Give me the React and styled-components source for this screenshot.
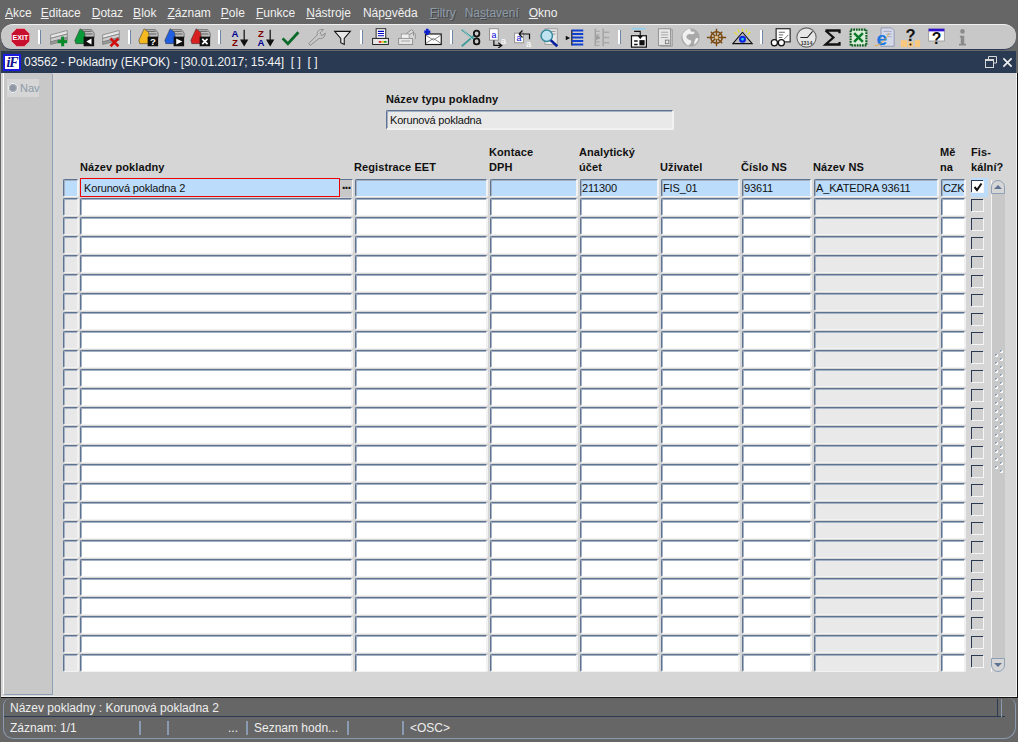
import React from 'react';
import styled, { createGlobalStyle } from 'styled-components';

const Global = createGlobalStyle`
  html, body { margin: 0; padding: 0; background: #666666; overflow: hidden; }
  * { box-sizing: border-box; }
  body { font-family: "Liberation Sans", Arial, sans-serif; }
`;

const Page = styled.div`
  width: 1018px; height: 742px; background: #666666; display: flex; flex-direction: column; overflow: hidden;
`;
const MenuBar = styled.div`
  height: 24px; display: flex; align-items: center; padding: 2px 0 0 5px; flex: none;
`;
const MenuItem = styled.span`
  font-size: 12px; margin-right: ${p => p.$gap}px; color: ${p => (p.$off ? '#8d9cab' : '#f0f0f0')};
  text-shadow: ${p => (p.$off ? '1px 1px 0 #484848' : 'none')};
  white-space: nowrap;
`;
const Toolbar = styled.div`
  height: 26px; margin: 0 2px 0 1px; flex: none; display: flex; align-items: center; padding-left: 6px;
  background: #c8c8c8; border-top: 1px solid #f0f0f0; border-bottom: 1px solid #2a3a52;
  border-radius: 12px 12px 12px 10px / 12px;
`;
const Slot = styled.div`
  width: 26px; height: 24px; flex: none; display: flex; align-items: center; justify-content: center;
  svg { display: block; }
`;
const Sep = styled.div`
  width: 12px; height: 24px; flex: none; display: flex; justify-content: center; align-items: center;
  &::before { content: ''; width: 2px; height: 14px; background: #fff; border-right: 1px solid #6f86a4; }
`;
const Win = styled.div`
  flex: 1; margin: 1px 0 0 1px; display: flex; flex-direction: column; min-height: 0;
`;
const TitleBar = styled.div`
  height: 22px; flex: none; margin-right: 2px; background: #2a3a52; display: flex; align-items: center; color: #f2f2f2; font-size: 12px;
  padding: 0 3px 0 2px;
`;
const Logo = styled.span`
  width: 18px; height: 17px; background: #fff; border: 2px solid #1a1ae0; color: #101090; font: italic bold 14px/13px "Liberation Serif", serif;
  text-align: center; margin-right: 3px; letter-spacing: -1px; flex: none; overflow: hidden;
`;
const TitleText = styled.span`flex: 1; white-space: pre;`;
const WinBtns = styled.div`display: flex; gap: 5px; align-items: center;`;
const Body = styled.div`
  flex: 1; display: flex; background: #d6d6d6; min-height: 0;
  border-right: 1px solid #111; border-bottom: 1px solid #111;
  box-shadow: inset -1px -1px 0 #efefef;
`;
const NavTab = styled.div`
  width: 50px; margin-left: 2px; margin-bottom: 2px; background: #c8c8c8; padding: 6px 0 0 3px; flex: none;
  border-left: 1px solid #fff; border-right: 1px solid #8ea0b6; border-bottom: 1px solid #8ea0b6;
  border-top-right-radius: 3px;
`;
const NavItem = styled.div`
  width: 32px; height: 18px; background: #d6d6d6; display: flex; align-items: center; gap: 2px; color: #8b9aa8; font-size: 11px; padding-left: 1px;
`;
const Radio = styled.span`
  width: 10px; height: 10px; border-radius: 50%; background: #8f97a3; border: 1px solid #f4f4f4; outline: 1px solid #aab2bc; outline-offset: -2px; flex: none;
`;
const Form = styled.div`flex: 1; padding: 19px 0 0 10px; min-width: 0; display: flex; flex-direction: column;`;
const TopBlock = styled.div`margin-left: 323px; width: 288px;`;
const Label = styled.div`
  font-weight: bold; font-size: 11px; line-height: 14px; color: #111; letter-spacing: 0.15px;
`;
const edge = `
  border-top: 1px solid #5e7391; border-left: 1px solid #5e7391;
  border-right: 2px solid #f2f2f2; border-bottom: 1px solid #f2f2f2; border-radius: 2px;
  box-shadow: inset 1px 1px 0 #a3b1c3;
`;
const TopField = styled.div`
  margin-top: 4px; height: 20px; background: #e9e9e9; font-size: 11px; line-height: 18px; padding-left: 3px; color: #111; letter-spacing: -0.2px;
  ${edge}
  border-bottom-width: 2px;
`;
const COLS = '17px 275px 135px 90px 81px 81px 72px 127px 27px 23px';
const TableWrap = styled.div`display: flex; align-items: flex-start;`;
const Table = styled.div`width: 928px; flex: none;`;
const HeadRow = styled.div`
  margin-top: 15px; height: 33px; display: grid; grid-template-columns: ${COLS}; align-items: start;
`;
const Head = styled.div`
  font-weight: bold; font-size: 11px; line-height: 15px; color: #111; white-space: pre; margin-left: ${p => p.$ml || 0}px;
  align-self: start; padding-top: ${p => (p.$single ? 15 : 0)}px; letter-spacing: 0.1px;
`;
const Rows = styled.div`display: grid; grid-template-columns: ${COLS}; grid-auto-rows: 19px;`;
const Marker = styled.div`
  width: 16px; height: 18px; margin-top: 1px; background: ${p => (p.$active ? '#bcdcfb' : '#e8e8e8')};
  ${edge}
`;
const Field = styled.div`
  height: 18px; margin-top: 1px; margin-right: 2px; font-size: 11px; line-height: 17px; padding-left: 1px; color: #111; white-space: nowrap; overflow: hidden; letter-spacing: -0.15px;
  background: ${p => (p.$active ? '#bcdcfb' : p.$ro ? '#e9e9e9' : '#fff')};
  ${edge}
`;
const NameCell = styled.div`display: flex; margin-right: 2px; height: 19px;`;
const Current = styled.div`
  width: 260px; height: 19px; flex: none; background: #bcdcfb; border: 1px solid #f00000; font-size: 11px; line-height: 18px; padding-left: 3px; color: #111; letter-spacing: -0.15px;
`;
const LovBtn = styled.div`
  flex: 1; height: 18px; margin-top: 1px; background: #c8c8c8; color: #111; font-weight: bold; font-size: 14px; line-height: 8px; text-align: center;
  border-top: 1px solid #5e7391; border-right: 1px solid #f4f4f4; letter-spacing: -1px;
`;
const CheckCell = styled.div`
  width: 17px; height: 19px; margin-left: 3px; padding-top: 2px; background: ${p => (p.$active ? '#bcdcfb' : 'transparent')};
`;
const Check = styled.div`
  width: 12px; height: 12px; border-top: 1px solid #2a3a52; border-left: 1px solid #2a3a52; box-shadow: 1px 1px 0 #f6f6f6;
  display: flex; align-items: center; justify-content: center;
  background: ${p => (p.$on ? '#fff' : '#d0d0d0')};
`;
const Scroll = styled.div`
  width: 14px; flex: none; margin-top: 50px; height: 492px; display: flex; flex-direction: column; align-items: stretch;
  border-left: 1px solid #f4f4f4;
`;
const ScrollBtn = styled.div`
  height: 14px; flex: none; background: #d6d6d6; display: flex; align-items: center; justify-content: center;
  border: 1px solid #8ea0b6; margin-left: -1px;
  border-radius: ${p => (p.$up ? '7px 7px 0 0' : '0 0 7px 7px')};
  &::before { content: ''; width: 0; height: 0; border-left: 4px solid transparent; border-right: 4px solid transparent;
    ${p => (p.$up ? 'border-bottom: 4px solid #5e7391;' : 'border-top: 4px solid #5e7391;')} }
`;
const Track = styled.div`
  flex: 1; background: #c8c8c8; padding: 156px 0 0 3px;
`;
const Grip = styled.div`
  display: flex; flex-direction: column;
  span { width: 3px; height: 3px; margin-bottom: 1px; background: linear-gradient(135deg, #8ea0b6 40%, #f6f6f6 40%); display: block; }
  span:nth-child(odd) { margin-left: 5px; }
`;
const Status = styled.div`
  flex: none; margin: 0 2px 3px 3px; height: 41px; border: 1px solid #8a9ab0; border-top: none; border-radius: 8px 8px 12px 10px; display: flex; flex-direction: column; color: #eeeeee; font-size: 12px;
`;
const StatusTop = styled.div`
  height: 19px; display: flex; align-items: center; padding: 2px 0 0 6px; border-bottom: 1px solid #2a3a52; margin-right: 10px; justify-content: space-between;
`;
const StatusEnd = styled.span`width: 5px; height: 18px; border-left: 1px solid #2a3a52; border-right: 1px solid #8a9ab0; margin-right: 3px;`;
const StatusBottom = styled.div`height: 21px; display: flex; align-items: center;`;
const Cell = styled.div`
  width: ${p => p.$w}px; height: 14px; padding-left: ${p => p.$pl ?? 6}px; display: flex; align-items: center; white-space: nowrap;
  justify-content: ${p => (p.$right ? 'flex-end' : 'flex-start')}; padding-right: ${p => (p.$right ? 8 : 0)}px;
  border-right: ${p => (p.$last ? 'none' : '2px solid #8a9ab0')};
`;

/* ---------- icons ---------- */
const S = ({ children, w = 21 }) => <svg width={w} height={w} viewBox="0 0 24 24">{children}</svg>;
const T = ({ x, y, c, s = 10, b = true, children }) => (
  <text x={x} y={y} fill={c} fontSize={s} fontWeight={b ? 'bold' : 'normal'} fontFamily="Liberation Sans" textAnchor="middle">{children}</text>
);
const Exit = () => (
  <S w={23}><polygon points="8,2.5 16,2.5 21.5,8 21.5,16 16,21.5 8,21.5 2.5,16 2.5,8" fill="#c8102e" stroke="#f3c0c0" strokeWidth="0.6" /><T x={12} y={15} c="#fff" s={7.5}>EXIT</T></S>
);
const Sheets = ({ c = '#9a9a9a' }) => (
  <g>
    <polygon points="3,9 22,4 22,8 3,13" fill="#e6e6e6" stroke="#777" strokeWidth="0.8" />
    <polygon points="3,13 22,8 22,12 3,17" fill="#cfcfcf" stroke="#777" strokeWidth="0.8" />
    <polygon points="3,17 22,12 22,15 3,20" fill={c} stroke="#777" strokeWidth="0.8" />
  </g>
);
const Rec = ({ col, tail }) => (
  <S>
    <polygon points="9,3 20,3 23,7 23,12 12,12" fill="#bdbdbd" stroke="#555" strokeWidth="0.8" />
    <line x1="11" y1="5" x2="20" y2="5" stroke="#555" /><line x1="12" y1="8" x2="21" y2="8" stroke="#555" />
    <polygon points="7,2 12,6 14,19 2,19 1,15" fill={col} stroke="#333" strokeWidth="0.6" />
    <rect x="11" y="11" width="12" height="11" fill="#111" />
    {tail}
  </S>
);
const Add = () => (
  <S><Sheets /><rect x="15" y="11" width="3.5" height="11" fill="#0a8a2a" /><rect x="11" y="15" width="11" height="3.5" fill="#0a8a2a" /></S>
);
const Del = () => (
  <S><Sheets /><path d="M12 13 L21 22 M21 13 L12 22" stroke="#d01010" strokeWidth="3" /></S>
);
const Back = () => <Rec col="#0a9a3a" tail={<polygon points="14,16.5 20,13 20,20" fill="#fff" />} />;
const QMark = () => <Rec col="#f4b820" tail={<T x={17} y={21} c="#fff" s={11}>?</T>} />;
const Play = () => <Rec col="#2060e0" tail={<polygon points="14,13 21,16.5 14,20" fill="#fff" />} />;
const Cross = () => <Rec col="#d82020" tail={<path d="M14 13.5 L20 19.5 M20 13.5 L14 19.5" stroke="#fff" strokeWidth="2" />} />;
const DownArrow = () => <path d="M18.5 3 V19 M15 15 L18.5 21 L22 15 Z" stroke="#111" strokeWidth="1.4" fill="#111" />;
const Az = () => (
  <S><T x={8} y={11} c="#000090" s={11}>A</T><T x={8} y={22} c="#800000" s={11}>Z</T><DownArrow /></S>
);
const Za = () => (
  <S><T x={8} y={11} c="#800000" s={11}>Z</T><T x={8} y={22} c="#000090" s={11}>A</T><DownArrow /></S>
);
const Ok = () => <S><path d="M3 13 L9 19 L21 6" fill="none" stroke="#0a6a2a" strokeWidth="3.2" /></S>;
const Wrench = () => (
  <S><path d="M5 21 L3 19 L13 9 C12 5 15 2 20 3 L16 7 L18 10 L22 7 C22 12 18 14 15 13 Z" fill="#c8c8c8" stroke="#8a8a8a" strokeWidth="1.1" /></S>
);
const Funnel = () => <S><path d="M3 5 H21 L14 13 V20 L10 18 V13 Z" fill="#e8e8e8" stroke="#111" strokeWidth="1.2" /></S>;
const Printer = () => (
  <S><rect x="7" y="2" width="11" height="11" fill="#fff" stroke="#111" /><path d="M9 5 H16 M9 7.5 H16 M9 10 H16" stroke="#0000c0" strokeWidth="1.2" />
    <rect x="3" y="13" width="18" height="7" fill="#e8e8e8" stroke="#111" /><rect x="10" y="16" width="3" height="2" fill="#e02020" /><rect x="13" y="16" width="3" height="2" fill="#e8c020" /><rect x="16" y="16" width="3" height="2" fill="#20a020" /></S>
);
const Printer2 = () => (
  <S><path d="M7 11 L18 3 L20 5 L20 10 M10 12 L20 6 L22 8 L22 14" fill="#d8d8d8" stroke="#8a8a8a" />
    <rect x="3" y="13" width="16" height="7" fill="#e6e6e6" stroke="#8a8a8a" /><rect x="6" y="8" width="9" height="5" fill="#f0f0f0" stroke="#9a9a9a" /><line x1="6" y1="16" x2="16" y2="16" stroke="#9a9a9a" /></S>
);
const Mail = () => (
  <S><rect x="4" y="8" width="18" height="12" fill="#fff" stroke="#111" strokeWidth="1.3" /><path d="M4 19 L13 13 L22 19 M4 9 L13 15 L22 9" fill="none" stroke="#555" strokeWidth="0.8" /><path d="M6 2 V9 M2.5 5.5 H9.5" stroke="#0a20d0" strokeWidth="3" /></S>
);
const Scissors = () => (
  <S><path d="M2 3 L17 15 M2 22 L17 9" stroke="#3f9a9a" strokeWidth="2" /><path d="M3 3 L15 15" stroke="#d8eeee" strokeWidth="0.6" /><ellipse cx="19" cy="7.5" rx="3.2" ry="3.4" fill="none" stroke="#111" strokeWidth="2" /><ellipse cx="19" cy="16.5" rx="3.2" ry="3.4" fill="none" stroke="#111" strokeWidth="2" /></S>
);
const Copy = () => (
  <S><rect x="4" y="2" width="10" height="13" fill="#fff" stroke="#888" /><T x={9} y={12} c="#0000e0" s={10} b={false}>a</T><path d="M9 15 V21 H17 M14 18 L18 21 L14 24" fill="none" stroke="#111" strokeWidth="1.4" /><T x={20} y={19} c="#fff" s={11} b={false}>a</T></S>
);
const Paste = () => (
  <S><rect x="3" y="7" width="10" height="11" fill="#fff" stroke="#888" /><T x={8} y={16} c="#0000e0" s={10} b={false}>a</T><path d="M8 8 L12 4 M8 8 L12 12 M9 8 H20 V14" fill="none" stroke="#111" strokeWidth="1.4" /><T x={19} y={23} c="#fff" s={11} b={false}>a</T></S>
);
const Search = () => (
  <S><rect x="8" y="2" width="14" height="18" fill="#e8e8e8" stroke="#999" /><path d="M11 5 H20 M11 8 H20" stroke="#888" /><circle cx="10" cy="10" r="6.5" fill="#bfe4f0" stroke="#3a8aa0" strokeWidth="1.8" /><line x1="14.5" y1="15" x2="22" y2="22" stroke="#0a20a0" strokeWidth="3" /></S>
);
const ListIcon = () => (
  <S><path d="M9 3 V21" stroke="#111" strokeWidth="1.4" /><path d="M9 4 H22 M9 8 H22 M9 12 H22 M9 16 H22 M9 20 H22" stroke="#1040d0" strokeWidth="2.2" /><polygon points="2,10 7,12.5 2,15" fill="#111" /></S>
);
const List2 = () => (
  <S><path d="M6 2 V22 M15 2 V22" stroke="#9a9a9a" strokeWidth="1.4" /><path d="M6 5 H11 M6 9 H11 M6 13 H11 M6 17 H11 M6 21 H11 M15 12 H22 M15 6 H22 M15 18 H22" stroke="#a8a8a8" strokeWidth="1.6" /><polygon points="7,9 12,12 7,15" fill="#9a9a9a" /></S>
);
const DocDown = () => (
  <S><rect x="4" y="1" width="16" height="2" fill="#8fd0f0" /><rect x="4" y="10" width="17" height="13" fill="#fff" stroke="#111" strokeWidth="1.4" /><path d="M7 16 H11 M7 20 H11" stroke="#111" strokeWidth="1.6" /><rect x="13" y="15" width="6" height="6" fill="#111" /><path d="M7 5 H14 V12" fill="none" stroke="#111" strokeWidth="1.2" /><polygon points="11,10 17,10 14,14" fill="#111" /></S>
);
const DocGrey = () => (
  <S><rect x="5" y="2" width="14" height="19" fill="#e6e6e6" stroke="#8a8a8a" /><path d="M19 3 H21 V22 H7" fill="none" stroke="#9a9a9a" /><path d="M8 6 H16 M8 9 H16 M8 12 H16" stroke="#a0a0a0" /><rect x="13" y="15" width="4" height="4" fill="none" stroke="#777" /></S>
);
const Globe = () => (
  <S><circle cx="12" cy="12" r="10.5" fill="#a8a8a8" /><path d="M3 8 C5 4 9 2 12 2 C11 5 14 6 16 5 C18 7 15 9 12 8 C9 8 6 10 8 13 C10 15 13 14 13 17 C12 19 10 21 9 21 C5 19 2 13 3 8 Z M18 13 C20 12 21 13 21 14 C20 17 18 19 16 20 C16 17 17 15 18 13 Z" fill="#f0f0f0" /></S>
);
const Wheel = () => (
  <S><circle cx="12" cy="12" r="6.5" fill="none" stroke="#7a4a10" strokeWidth="1.8" /><path d="M1 12 H23 M12 2 V22 M5.5 5.5 L18.5 18.5 M18.5 5.5 L5.5 18.5" stroke="#7a4a10" strokeWidth="1.6" /><circle cx="12" cy="12" r="2" fill="#e0c090" /></S>
);
const Eye = () => (
  <S><polygon points="12,6 23,19 1,19" fill="#bdbdbd" stroke="#111" strokeWidth="1.2" /><circle cx="12" cy="14" r="4" fill="#0a20e0" /><circle cx="12" cy="14" r="1.6" fill="#20c0f0" /><path d="M3 6 L6 9 M21 6 L18 9 M12 2 V5 M7 3 L8 6 M17 3 L16 6" stroke="#e8e020" strokeWidth="1.4" /></S>
);
const Glasses = () => (
  <S><rect x="7" y="2" width="16" height="15" fill="#fff" stroke="#111" strokeWidth="1.2" /><path d="M10 6 H17 M10 9 H15 M10 12 H14 M16 14 L21 9" stroke="#555" /><circle cx="5" cy="18" r="3.5" fill="#fff" stroke="#111" strokeWidth="1.4" /><circle cx="13" cy="18" r="3.5" fill="#fff" stroke="#111" strokeWidth="1.4" /></S>
);
const Clock = () => (
  <S><circle cx="12" cy="12" r="11" fill="#e6e6e6" stroke="#666" strokeWidth="1.2" /><path d="M5 12 H13 L19 5" fill="none" stroke="#222" strokeWidth="1.2" /><T x={12} y={20} c="#333" s={6}>1314</T></S>
);
const Sigma = () => <S><path d="M4 4 H20 V7 M4 4 L13 12 L4 20 H20 V17" fill="none" stroke="#111" strokeWidth="2.6" /></S>;
const Excel = () => (
  <S><rect x="3" y="3" width="18" height="18" fill="#d8ecd8" stroke="#0a5a1a" strokeWidth="2.4" strokeDasharray="2 1" /><path d="M7 7 L17 17 M17 7 L7 17" stroke="#0a7a2a" strokeWidth="2.8" /></S>
);
const Ie = () => (
  <S><path d="M8 1 H20 L23 4 V22 H8 Z" fill="#d4d8e8" stroke="#8a94b0" /><path d="M11 5 H20 M14 8 H20 M16 11 H20" stroke="#9aa4c0" /><T x={9} y={20} c="#1a78e0" s={22}>e</T><path d="M1 21 C5 23 15 13 17 7" fill="none" stroke="#e0a020" strokeWidth="0.9" /></S>
);
const Help = () => (
  <S><T x={12} y={16} c="#111" s={19}>?</T><rect x="1" y="15" width="7" height="8" fill="#f8c880" /><rect x="9" y="17" width="6" height="6" fill="#f8c880" /><rect x="17" y="15" width="6" height="8" fill="#f8c880" /><rect x="11" y="19" width="2" height="2" fill="#111" /></S>
);
const Help2 = () => (
  <S><rect x="3" y="2" width="18" height="14" fill="#fff" stroke="#999" /><rect x="3" y="2" width="18" height="3" fill="#3010d0" /><T x={12} y={19} c="#111" s={18}>?</T></S>
);
const Info = () => (
  <S><circle cx="12" cy="5" r="2.6" fill="#8a8a8a" /><path d="M9 10 H14 V19 H16 V21 H8 V19 H10 V12 H9 Z" fill="#8a8a8a" /></S>
);
const Restore = () => (
  <svg width="12" height="12" viewBox="0 0 12 12"><path d="M3.5 3 V.5 H11.5 V7 H8.5" fill="none" stroke="#d8d8d8" /><rect x=".5" y="3.5" width="8" height="8" fill="none" stroke="#d8d8d8" /><line x1="1" y1="4.5" x2="8" y2="4.5" stroke="#d8d8d8" /></svg>
);
const CloseX = () => (
  <svg width="11" height="11" viewBox="0 0 12 12"><path d="M1.5 1.5 L10.5 10.5 M10.5 1.5 L1.5 10.5" stroke="#f0f0f0" strokeWidth="1.8" /></svg>
);
const Tick = () => (
  <svg width="10" height="10" viewBox="0 0 10 10"><path d="M1.5 5 L4 8 L8.5 1.5" fill="none" stroke="#111" strokeWidth="2" /></svg>
);

/* ---------- data ---------- */
const menu = [
  { pre: '', u: 'A', post: 'kce', gap: 9 },
  { pre: '', u: 'E', post: 'ditace', gap: 11 },
  { pre: '', u: 'D', post: 'otaz', gap: 10 },
  { pre: '', u: 'B', post: 'lok', gap: 11 },
  { pre: '', u: 'Z', post: 'áznam', gap: 10 },
  { pre: '', u: 'P', post: 'ole', gap: 11 },
  { pre: '', u: 'F', post: 'unkce', gap: 11 },
  { pre: '', u: 'N', post: 'ástroje', gap: 12 },
  { pre: 'Náp', u: 'o', post: 'věda', gap: 12 },
  { pre: '', u: 'F', post: 'iltry', gap: 9, off: true },
  { pre: 'Na', u: 's', post: 'tavení', gap: 10, off: true },
  { pre: '', u: 'O', post: 'kno', gap: 0 },
];
const tools = [Exit, 0, Add, Back, Del, 0, QMark, Play, Cross, 0, Az, Za, Ok, Wrench, Funnel, 0, Printer, Printer2, Mail, 0, Scissors, Copy, Paste, Search, ListIcon, List2, 0, DocDown, DocGrey, Globe, Wheel, Eye, 0, Glasses, Clock, Sigma, Excel, Ie, Help, Help2, Info];
const heads = [
  { t: '' }, { t: 'Název pokladny', s: 1 }, { t: 'Registrace EET', s: 1, ml: -1 }, { t: 'Kontace\nDPH', ml: -1 }, { t: 'Analytický\núčet', ml: -1 },
  { t: 'Uživatel', s: 1, ml: -1 }, { t: 'Číslo NS', s: 1, ml: -1 }, { t: 'Název NS', s: 1, ml: -1 }, { t: 'Mě\nna', ml: -1 }, { t: 'Fis-\nkální?', ml: 3 },
];
const first = [
  { v: '' }, { v: '' }, { v: '211300' }, { v: 'FIS_01' }, { v: '93611' }, { v: 'A_KATEDRA 93611', ro: 1 }, { v: 'CZK' },
];
const rowIdx = Array.from({ length: 26 }, (_, i) => i);

export default function App() {
  return (
    <Page>
      <Global />
      <MenuBar>
        {menu.map((m, i) => (
          <MenuItem key={i} $gap={m.gap} $off={m.off}>{m.pre}<u>{m.u}</u>{m.post}</MenuItem>
        ))}
      </MenuBar>
      <Toolbar>
        {tools.map((Ic, i) => (Ic ? <Slot key={i}><Ic /></Slot> : <Sep key={i} />))}
      </Toolbar>
      <Win>
        <TitleBar>
          <Logo>iF</Logo>
          <TitleText>03562 - Pokladny (EKPOK) - [30.01.2017; 15:44]  [ ]  [ ]</TitleText>
          <WinBtns><Restore /><CloseX /></WinBtns>
        </TitleBar>
        <Body>
          <NavTab><NavItem><Radio />Nav</NavItem></NavTab>
          <Form>
            <TopBlock>
              <Label>Název typu pokladny</Label>
              <TopField>Korunová pokladna</TopField>
            </TopBlock>
            <TableWrap>
              <Table>
                <HeadRow>
                  {heads.map((h, i) => <Head key={i} $single={h.s} $ml={h.ml}>{h.t}</Head>)}
                </HeadRow>
                <Rows>
                  {rowIdx.map(r => (
                    <React.Fragment key={r}>
                      <Marker $active={r === 0} />
                      {r === 0 ? (
                        <NameCell><Current>Korunová pokladna 2</Current><LovBtn>...</LovBtn></NameCell>
                      ) : <Field />}
                      {first.map((c, i) => (
                        <Field key={i} $active={r === 0} $ro={c.ro}>{r === 0 ? c.v : ''}</Field>
                      ))}
                      <CheckCell $active={r === 0}><Check $on={r === 0}>{r === 0 && <Tick />}</Check></CheckCell>
                    </React.Fragment>
                  ))}
                </Rows>
              </Table>
              <Scroll>
                <ScrollBtn $up />
                <Track>
                  <Grip>{Array.from({ length: 31 }, (_, i) => <span key={i} />)}</Grip>
                </Track>
                <ScrollBtn />
              </Scroll>
            </TableWrap>
          </Form>
        </Body>
      </Win>
      <Status>
        <StatusTop>Název pokladny : Korunová pokladna 2<StatusEnd /></StatusTop>
        <StatusBottom>
          <Cell $w={137}>Záznam: 1/1</Cell>
          <Cell $w={28} />
          <Cell $w={79} $right>...</Cell>
          <Cell $w={101}>Seznam hodn...</Cell>
          <Cell $w={55} />
          <Cell $w={100} $last>&lt;OSC&gt;</Cell>
        </StatusBottom>
      </Status>
    </Page>
  );
}
